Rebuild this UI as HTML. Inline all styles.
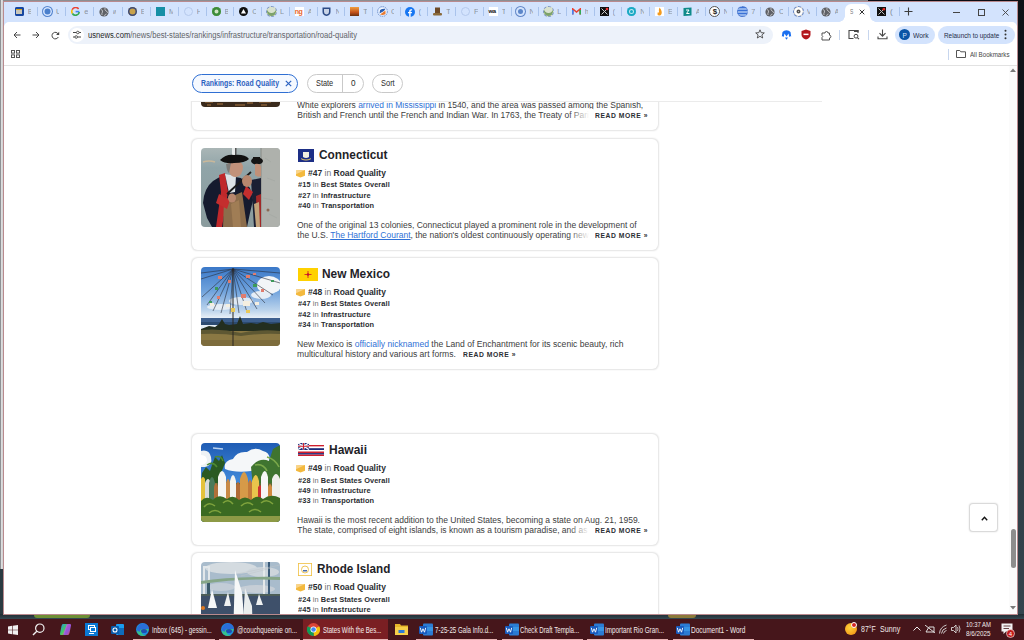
<!DOCTYPE html><html><head><meta charset="utf-8"><style>
*{margin:0;padding:0;box-sizing:border-box}
html,body{width:1024px;height:640px;overflow:hidden;background:#1b252c;font-family:"Liberation Sans",sans-serif}
.a{position:absolute}
.nw{white-space:nowrap}
.sep{position:absolute;top:7px;width:1px;height:9px;background:#a9c3ec}
.card{position:absolute;width:466px;height:111px;background:#fff;border-radius:6px;box-shadow:0 0 1.6px 0.4px rgba(0,0,0,.11)}
.img{position:absolute;left:9px;top:9px;width:79px;height:79px;border-radius:4px;overflow:hidden}
.img svg{display:block}
i{font-style:normal;font-weight:normal;color:#6f6f6f}
a{color:#2f71d6;text-decoration:none}
a.u{text-decoration:underline}
.fade{color:inherit}
</style></head><body>
<div class="a" style="left:0;top:0;width:868px;height:1px;background:#8c8e92"></div>
<div class="a" style="left:868px;top:0;width:156px;height:1px;background:#0b0c14"></div>
<div class="a" style="left:0;top:0;width:3px;height:569px;background:linear-gradient(90deg,#8f9194 0,#8f9194 1px,#e0e1e2 1px,#cfd0d1 3px)"></div>
<div class="a" style="left:0;top:569px;width:3px;height:50px;background:#2b3a41"></div>
<div class="a" style="left:1018px;top:0;width:6px;height:618px;background:linear-gradient(#0d1116,#141b21 35%,#2c3a42 60%,#34454e)"></div>
<div class="a" style="left:0;top:614px;width:1024px;height:5px;background:linear-gradient(#1f2b31,#354852)"></div>
<div class="a" style="left:668px;top:615px;width:28px;height:3px;background:#8c7a3a;border-radius:0 0 6px 6px"></div>
<div class="a" style="left:34px;top:615px;width:56px;height:3px;background:#6e8f34;border-radius:0 0 4px 4px"></div>
<div class="a" style="left:3px;top:1px;width:1015px;height:614px;background:#fff;border:1px solid #b98a8e"></div>
<div class="a" style="left:4px;top:2px;width:1013px;height:24px;background:#d3e3fd"></div>
<div class="a" style="left:14.600000000000001px;top:7px;width:9px;height:9px;border-radius:2px;background:#1646a0;box-shadow:inset 0 0 0 1.5px #1646a0;"><div style="margin:2px 1.5px;height:5px;background:#c9c6b8;border-top:1.5px solid #d8a21a"></div></div>
<div class="a nw " style="left:27.7px;top:7.80px;line-height:8.27px;color:#8a939f;font-size:7.4px;font-weight:normal;overflow:hidden;width:3.5px;">B</div>
<div class="sep" style="left:36.84px"></div>
<div class="a" style="left:41.88px;top:6px;width:11px;height:11px;border-radius:50%;border:1px dashed #5a88d0;background:#4a7fcc;box-shadow:inset 0 0 0 1.5px #d3e3fd"></div>
<div class="a nw " style="left:55.98px;top:7.80px;line-height:8.27px;color:#8a939f;font-size:7.4px;font-weight:normal;overflow:hidden;width:3.5px;">U</div>
<div class="sep" style="left:65.12px"></div>
<svg class="a" style="left:71.16px;top:7px" width="9" height="9" viewBox="0 0 9 9"><path d="M8.3 4.6H4.6" stroke="#4285f4" stroke-width="1.6"/><path d="M7.6 2A3.7 3.7 0 0 0 1.2 2.8" fill="none" stroke="#ea4335" stroke-width="1.6"/><path d="M1.2 2.8A3.7 3.7 0 0 0 1.4 6.5" fill="none" stroke="#fbbc05" stroke-width="1.6"/><path d="M1.4 6.5A3.7 3.7 0 0 0 8.2 5" fill="none" stroke="#34a853" stroke-width="1.6"/></svg>
<div class="a nw " style="left:84.26px;top:7.80px;line-height:8.27px;color:#8a939f;font-size:7.4px;font-weight:normal;overflow:hidden;width:3.5px;">e</div>
<div class="sep" style="left:93.4px"></div>
<svg class="a" style="left:98.94px;top:6.5px" width="10" height="10" viewBox="0 0 10 10"><circle cx="5" cy="5" r="4.6" fill="#5f6166"/><path d="M2 2.5Q4 3 3.5 5Q2.5 6 3 8M6 1Q5.5 3 7 4Q8.5 4.5 9 6M5.5 9Q6 7 7.5 7" stroke="#c8cacd" stroke-width="0.9" fill="none"/></svg>
<div class="a nw " style="left:112.54px;top:7.80px;line-height:8.27px;color:#8a939f;font-size:7.4px;font-weight:normal;overflow:hidden;width:3.5px;">w</div>
<div class="sep" style="left:121.68px"></div>
<div class="a" style="left:127.72px;top:7px;width:9px;height:9px;border-radius:50%;background:#c9a24a;box-shadow:inset 0 0 0 1.5px #3b4a7a"></div>
<div class="a nw " style="left:140.82px;top:7.80px;line-height:8.27px;color:#8a939f;font-size:7.4px;font-weight:normal;overflow:hidden;width:3.5px;">E</div>
<div class="sep" style="left:149.96px"></div>
<div class="a" style="left:156.0px;top:7px;width:9px;height:9px;background:#168fa5"></div>
<div class="a nw " style="left:169.1px;top:7.80px;line-height:8.27px;color:#8a939f;font-size:7.4px;font-weight:normal;overflow:hidden;width:3.5px;">M</div>
<div class="sep" style="left:177.97px"></div>
<div class="a" style="left:183.75px;top:7px;width:9px;height:9px;border-radius:50%;border:1.3px solid #b5c9ec"></div>
<div class="a nw " style="left:196.85px;top:7.80px;line-height:8.27px;color:#8a939f;font-size:7.4px;font-weight:normal;overflow:hidden;width:3.5px;">H</div>
<div class="sep" style="left:205.72px"></div>
<div class="a" style="left:211.5px;top:7px;width:9px;height:9px;border-radius:50%;background:#3b8c3a;box-shadow:inset 0 0 0 2.5px #3b8c3a,inset 0 0 0 5px #cfe5c5"></div>
<div class="a nw " style="left:224.6px;top:7.80px;line-height:8.27px;color:#8a939f;font-size:7.4px;font-weight:normal;overflow:hidden;width:3.5px;">B</div>
<div class="sep" style="left:233.47px"></div>
<svg class="a" style="left:239.25px;top:7px" width="9" height="9"><circle cx="4.5" cy="4.5" r="4.5" fill="#111"/><path d="M4.5 2L7 6.5H2Z" fill="#fff"/></svg>
<div class="a nw " style="left:252.35px;top:7.80px;line-height:8.27px;color:#8a939f;font-size:7.4px;font-weight:normal;overflow:hidden;width:3.5px;">C</div>
<div class="sep" style="left:261.23px"></div>
<div class="a" style="left:266.0px;top:6px;width:11px;height:11px;border-radius:50%;border:1px dashed #7d96c4;background:#d9e2cf;box-shadow:inset 0 -3px 0 0 #7ea36a"></div>
<div class="a nw " style="left:280.1px;top:7.80px;line-height:8.27px;color:#8a939f;font-size:7.4px;font-weight:normal;overflow:hidden;width:3.5px;">L</div>
<div class="sep" style="left:288.95px"></div>
<div class="a" style="left:294.7px;top:7px;width:9px;height:9px;background:#fff;color:#e8632b;font-size:7px;line-height:9px;font-weight:bold;letter-spacing:-0.5px">ng</div>
<div class="a nw " style="left:307.8px;top:7.80px;line-height:8.27px;color:#8a939f;font-size:7.4px;font-weight:normal;overflow:hidden;width:3.5px;">A</div>
<div class="sep" style="left:316.65px"></div>
<svg class="a" style="left:322.4px;top:7px" width="9" height="9"><path d="M0.5 0.5H8.5V5Q8.5 8 4.5 9Q0.5 8 0.5 5Z" fill="#2b4a86"/><path d="M2 2H7V5Q7 7 4.5 7.5Q2 7 2 5Z" fill="#c8d3e6"/></svg>
<div class="a nw " style="left:335.5px;top:7.80px;line-height:8.27px;color:#8a939f;font-size:7.4px;font-weight:normal;overflow:hidden;width:3.5px;">N</div>
<div class="sep" style="left:344.35px"></div>
<div class="a" style="left:350.09999999999997px;top:7px;width:9px;height:9px;background:linear-gradient(#f0a040,#c2501a 60%,#6a3010)"></div>
<div class="a nw " style="left:363.2px;top:7.80px;line-height:8.27px;color:#8a939f;font-size:7.4px;font-weight:normal;overflow:hidden;width:3.5px;">T</div>
<div class="sep" style="left:372.05px"></div>
<svg class="a" style="left:376.79999999999995px;top:6px" width="11" height="11"><circle cx="5.5" cy="5.5" r="5" fill="none" stroke="#6a8cc8" stroke-width="0.8" stroke-dasharray="1.5 0.8"/><circle cx="5.5" cy="5.5" r="3.6" fill="#fff"/><path d="M2.5 7.5L3 4Q5 2.5 8.5 2.8L7 5Z" fill="#2a5db0"/><path d="M3 8.5L8.5 4.5V8Q6 9.5 3 8.5Z" fill="#e87a30"/></svg>
<div class="a nw " style="left:390.9px;top:7.80px;line-height:8.27px;color:#8a939f;font-size:7.4px;font-weight:normal;overflow:hidden;width:3.5px;">C</div>
<div class="sep" style="left:399.75px"></div>
<svg class="a" style="left:405.0px;top:6.5px" width="10" height="10"><circle cx="5" cy="5" r="5" fill="#1877f2"/><path d="M5.6 10V6.3H6.8L7 4.9H5.6V4.1Q5.6 3.5 6.3 3.5H7.1V2.3Q6.6 2.2 6 2.2Q4.2 2.2 4.2 4V4.9H3V6.3H4.2V10Z" fill="#fff"/></svg>
<div class="a nw " style="left:418.6px;top:7.80px;line-height:8.27px;color:#8a939f;font-size:7.4px;font-weight:normal;overflow:hidden;width:3.5px;">(</div>
<div class="sep" style="left:427.45px"></div>
<svg class="a" style="left:433.19999999999993px;top:7px" width="9" height="9"><rect x="2" y="0.5" width="5" height="6" fill="#6d4a28"/><rect x="0" y="6" width="9" height="2.5" rx="1" fill="#8a6a3a"/></svg>
<div class="a nw " style="left:446.3px;top:7.80px;line-height:8.27px;color:#8a939f;font-size:7.4px;font-weight:normal;overflow:hidden;width:3.5px;">T</div>
<div class="sep" style="left:455.15px"></div>
<div class="a" style="left:460.9px;top:7px;width:9px;height:9px;border-radius:50%;border:1.3px solid #b5c9ec"></div>
<div class="a nw " style="left:474.0px;top:7.80px;line-height:8.27px;color:#8a939f;font-size:7.4px;font-weight:normal;overflow:hidden;width:3.5px;">F</div>
<div class="sep" style="left:482.85px"></div>
<div class="a" style="left:488.59999999999997px;top:7px;width:9px;height:9px;background:#fff;color:#111;font-size:6px;line-height:9px;font-weight:bold;letter-spacing:-0.6px">wa</div>
<div class="a nw " style="left:501.7px;top:7.80px;line-height:8.27px;color:#8a939f;font-size:7.4px;font-weight:normal;overflow:hidden;width:3.5px;">T</div>
<div class="sep" style="left:510.55px"></div>
<div class="a" style="left:515.3px;top:6px;width:11px;height:11px;border-radius:50%;border:1px dashed #6a8ac8;background:#5c86c8;box-shadow:inset 0 0 0 2px #d3e3fd"></div>
<div class="a nw " style="left:529.4px;top:7.80px;line-height:8.27px;color:#8a939f;font-size:7.4px;font-weight:normal;overflow:hidden;width:3.5px;">N</div>
<div class="sep" style="left:538.27px"></div>
<div class="a" style="left:543.0363636363636px;top:6px;width:11px;height:11px;border-radius:50%;border:1px dashed #7d96c4;background:#d9e2cf;box-shadow:inset 0 -3px 0 0 #7ea36a"></div>
<div class="a nw " style="left:557.14px;top:7.80px;line-height:8.27px;color:#8a939f;font-size:7.4px;font-weight:normal;overflow:hidden;width:3.5px;">L</div>
<div class="sep" style="left:566.0px"></div>
<svg class="a" style="left:571.7727272727273px;top:8px" width="9" height="7"><path d="M0.8 6.5V1L4.5 4L8.2 1V6.5" fill="none" stroke="#ea4335" stroke-width="1.6"/><path d="M0.8 6.5V2" stroke="#4285f4" stroke-width="1.6"/><path d="M8.2 6.5V2" stroke="#34a853" stroke-width="1.6"/></svg>
<div class="a nw " style="left:584.87px;top:7.80px;line-height:8.27px;color:#8a939f;font-size:7.4px;font-weight:normal;overflow:hidden;width:3.5px;">h</div>
<div class="sep" style="left:593.74px"></div>
<svg class="a" style="left:599.5090909090909px;top:7px" width="9" height="9"><rect width="9" height="9" fill="#111"/><path d="M1.5 1.5L7.5 7.5M7.5 1.5L1.5 7.5" stroke="#ccc" stroke-width="1"/><circle cx="7" cy="2" r="1.3" fill="#e33"/></svg>
<div class="a nw " style="left:612.61px;top:7.80px;line-height:8.27px;color:#8a939f;font-size:7.4px;font-weight:normal;overflow:hidden;width:3.5px;">(</div>
<div class="sep" style="left:621.48px"></div>
<div class="a" style="left:627.2454545454545px;top:7px;width:9px;height:9px;border-radius:50%;background:#1aa8c4;box-shadow:inset 0 0 0 2px #1aa8c4,inset 0 0 0 3px #bfe9f2"></div>
<div class="a nw " style="left:640.35px;top:7.80px;line-height:8.27px;color:#8a939f;font-size:7.4px;font-weight:normal;overflow:hidden;width:3.5px;">N</div>
<div class="sep" style="left:649.21px"></div>
<svg class="a" style="left:654.9818181818182px;top:7px" width="9" height="9"><rect width="9" height="9" fill="#fff"/><path d="M4.5 0.5Q7.5 4 6.5 7Q5.5 8.8 4 8.5Q2 8 2.5 5.5Q3.5 6 4 5Q3.5 3 4.5 0.5Z" fill="#f39a1e"/></svg>
<div class="a nw " style="left:668.08px;top:7.80px;line-height:8.27px;color:#8a939f;font-size:7.4px;font-weight:normal;overflow:hidden;width:3.5px;">E</div>
<div class="sep" style="left:676.95px"></div>
<svg class="a" style="left:682.7181818181818px;top:7px" width="9" height="9"><path d="M0.5 1L8.5 0.5V8.5L0.5 9Z" fill="#0f8a8a"/><path d="M3 3H6L3.5 6.5H6.5" fill="none" stroke="#fff" stroke-width="1"/></svg>
<div class="a nw " style="left:695.82px;top:7.80px;line-height:8.27px;color:#8a939f;font-size:7.4px;font-weight:normal;overflow:hidden;width:3.5px;">A</div>
<div class="sep" style="left:704.69px"></div>
<div class="a" style="left:709.4545454545455px;top:6px;width:11px;height:11px;border-radius:50%;border:1px solid #555;background:#fff;color:#222;font-size:8px;font-weight:bold;line-height:10px;text-align:center">$</div>
<div class="a nw " style="left:723.55px;top:7.80px;line-height:8.27px;color:#8a939f;font-size:7.4px;font-weight:normal;overflow:hidden;width:3.5px;">N</div>
<div class="sep" style="left:732.42px"></div>
<div class="a" style="left:737.190909090909px;top:6px;width:11px;height:11px;border-radius:50%;border:1px dashed #5b82d0;background:repeating-linear-gradient(#3a72d6 0 1.5px,#8fb2ec 1.5px 3px)"></div>
<div class="a nw " style="left:751.29px;top:7.80px;line-height:8.27px;color:#8a939f;font-size:7.4px;font-weight:normal;overflow:hidden;width:3.5px;">7</div>
<div class="sep" style="left:760.16px"></div>
<svg class="a" style="left:765.4272727272727px;top:6.5px" width="10" height="10" viewBox="0 0 10 10"><circle cx="5" cy="5" r="4.6" fill="#5f6166"/><path d="M2 2.5Q4 3 3.5 5Q2.5 6 3 8M6 1Q5.5 3 7 4Q8.5 4.5 9 6M5.5 9Q6 7 7.5 7" stroke="#c8cacd" stroke-width="0.9" fill="none"/></svg>
<div class="a nw " style="left:779.03px;top:7.80px;line-height:8.27px;color:#8a939f;font-size:7.4px;font-weight:normal;overflow:hidden;width:3.5px;">C</div>
<div class="sep" style="left:787.9px"></div>
<div class="a" style="left:792.6636363636363px;top:6px;width:11px;height:11px;border-radius:50%;border:1px dashed #6a8ac8;background:#d8d8d8;box-shadow:inset 0 0 0 2.5px #fff,inset 0 0 0 4px #555"></div>
<div class="a nw " style="left:806.76px;top:7.80px;line-height:8.27px;color:#8a939f;font-size:7.4px;font-weight:normal;overflow:hidden;width:3.5px;">V</div>
<div class="sep" style="left:815.63px"></div>
<svg class="a" style="left:820.9px;top:6.5px" width="10" height="10" viewBox="0 0 10 10"><circle cx="5" cy="5" r="4.6" fill="#5f6166"/><path d="M2 2.5Q4 3 3.5 5Q2.5 6 3 8M6 1Q5.5 3 7 4Q8.5 4.5 9 6M5.5 9Q6 7 7.5 7" stroke="#c8cacd" stroke-width="0.9" fill="none"/></svg>
<div class="a nw " style="left:834.5px;top:7.80px;line-height:8.27px;color:#8a939f;font-size:7.4px;font-weight:normal;overflow:hidden;width:3.5px;">A</div>
<div class="a" style="left:845px;top:4px;width:25px;height:18px;background:#fff;border-radius:6px 6px 0 0"></div>
<div class="a" style="left:839px;top:16px;width:6px;height:6px;background:radial-gradient(circle at 0 0,#d3e3fd 5.5px,#fff 6px)"></div>
<div class="a" style="left:870px;top:16px;width:6px;height:6px;background:radial-gradient(circle at 100% 0,#d3e3fd 5.5px,#fff 6px)"></div>
<div class="a nw " style="left:850px;top:8.42px;line-height:8.49px;color:#777;font-size:7.6px;font-weight:normal;transform:scaleX(0.6498);transform-origin:0 0;">S</div>
<svg class="a" style="left:859.3px;top:9.3px" width="6" height="6"><path d="M0.7 0.7L5.3 5.3M5.3 0.7L0.7 5.3" stroke="#333" stroke-width="1"/></svg>
<svg class="a" style="left:877px;top:7px" width="9" height="9"><rect width="9" height="9" fill="#111"/><path d="M1.5 1.5L7.5 7.5M7.5 1.5L1.5 7.5" stroke="#bbb" stroke-width="1"/><circle cx="6.8" cy="2.2" r="1.3" fill="#e22"/></svg>
<div class="a nw " style="left:890px;top:8.46px;line-height:8.94px;color:#7f8997;font-size:8px;font-weight:normal;">(</div>
<div class="sep" style="left:899px"></div>
<svg class="a" style="left:904px;top:7px" width="9" height="9"><path d="M4.5 0.5V8.5M0.5 4.5H8.5" stroke="#3c3c3c" stroke-width="1.1"/></svg>
<div class="a" style="left:952.5px;top:11.5px;width:7px;height:1px;background:#444"></div>
<div class="a" style="left:977.5px;top:8.5px;width:7px;height:7px;border:1px solid #444"></div>
<svg class="a" style="left:1002px;top:8.5px" width="7" height="7"><path d="M0.5 0.5L6.5 6.5M6.5 0.5L0.5 6.5" stroke="#444" stroke-width="0.9"/></svg>
<div class="a" style="left:4px;top:22px;width:1013px;height:44px;background:#fff;border-radius:5px 5px 0 0"></div>
<div class="a" style="left:4px;top:65px;width:1013px;height:1px;background:#e2e2e2"></div>
<svg class="a" style="left:12.5px;top:31px" width="8" height="8"><path d="M7.5 4H1M4 1L1 4L4 7" fill="none" stroke="#474747" stroke-width="1"/></svg>
<svg class="a" style="left:31.5px;top:31px" width="8" height="8"><path d="M0.5 4H7M4 1L7 4L4 7" fill="none" stroke="#474747" stroke-width="1"/></svg>
<svg class="a" style="left:50.5px;top:30.5px" width="9" height="9"><path d="M7.3 3.2A3.3 3.3 0 1 0 7.3 6" fill="none" stroke="#474747" stroke-width="1"/><path d="M8.2 0.8V3.9H5.1Z" fill="#474747"/></svg>
<div class="a" style="left:68px;top:26px;width:705px;height:17.5px;background:#edf2fa;border-radius:9px"></div>
<div class="a" style="left:70px;top:28px;width:13.5px;height:13.5px;background:#fff;border-radius:50%"></div>
<svg class="a" style="left:72px;top:30px" width="10" height="10"><path d="M1 2.5H4.3M7.2 2.5H9M1 7H2.8M5.7 7H9" stroke="#474747" stroke-width="1"/><circle cx="5.8" cy="2.5" r="1.3" fill="none" stroke="#474747" stroke-width="0.9"/><circle cx="4.2" cy="7" r="1.3" fill="none" stroke="#474747" stroke-width="0.9"/></svg>
<div class="a nw " style="left:88.2px;top:30.60px;line-height:9.38px;color:#5f6368;font-size:8.4px;font-weight:normal;transform:scaleX(0.9072);transform-origin:0 0;"><span style="color:#262626">usnews.com</span>/news/best-states/rankings/infrastructure/transportation/road-quality</div>
<svg class="a" style="left:755px;top:29px" width="10" height="10"><path d="M5 0.8L6.2 3.7L9.3 3.9L6.9 5.9L7.7 9L5 7.3L2.3 9L3.1 5.9L0.7 3.9L3.8 3.7Z" fill="none" stroke="#474747" stroke-width="0.9"/></svg>
<svg class="a" style="left:781px;top:29.5px" width="11" height="10"><path d="M0.8 6.5L1.5 2Q3 0.3 5.5 0.3Q8 0.3 9.5 2L10.2 6.5Q9 6 8.3 7L7.5 3.5L5.5 6.5L3.5 3.5L2.7 7Q2 6 0.8 6.5Z" fill="#1a6ff0"/><path d="M4 7.5L5.5 9.8L7 7.5Z" fill="#1a6ff0"/></svg>
<svg class="a" style="left:801px;top:29px" width="10" height="11"><path d="M5 0.5L9.5 2V5.5Q9.5 9 5 10.5Q0.5 9 0.5 5.5V2Z" fill="#b3181e"/><rect x="2.5" y="4.6" width="5" height="1.5" fill="#fff"/></svg>
<svg class="a" style="left:820.5px;top:29.5px" width="11" height="11"><path d="M1 3H4A1.5 1.5 0 0 1 7 3H8.5V5.2A1.4 1.4 0 0 1 8.5 8V10H1V7.5A1.2 1.2 0 0 0 1 5.5Z" fill="none" stroke="#505050" stroke-width="1" stroke-linejoin="round"/></svg>
<div class="a" style="left:839px;top:30px;width:1px;height:10px;background:#c7d6ee"></div>
<svg class="a" style="left:848px;top:29px" width="12" height="11"><path d="M5.5 9.5H1V1.5H10V4" fill="none" stroke="#474747" stroke-width="1.1"/><rect x="6" y="1" width="4.5" height="2" fill="#474747"/><circle cx="8" cy="7.2" r="1.9" fill="none" stroke="#474747" stroke-width="1"/><path d="M9.4 8.6L11 10.2" stroke="#474747" stroke-width="1.1"/></svg>
<div class="a" style="left:868px;top:30px;width:1px;height:10px;background:#c7d6ee"></div>
<svg class="a" style="left:877px;top:29px" width="11" height="11"><path d="M5.5 0.5V7M2.5 4.2L5.5 7.2L8.5 4.2M1 7.5V9.8H10V7.5" fill="none" stroke="#474747" stroke-width="1.1"/></svg>
<div class="a" style="left:894.5px;top:26px;width:40.5px;height:17.5px;background:#d3e3fd;border-radius:9px"></div>
<div class="a" style="left:899.3px;top:29.3px;width:11px;height:11px;background:#0b55a6;border-radius:50%"></div>
<div class="a nw " style="left:902.6px;top:32.42px;line-height:7.26px;color:#d8e6ff;font-size:6.5px;font-weight:normal;">P</div>
<div class="a nw " style="left:913px;top:31.91px;line-height:8.38px;color:#1f2d4a;font-size:7.5px;font-weight:normal;transform:scaleX(0.8978);transform-origin:0 0;">Work</div>
<div class="a" style="left:938px;top:26px;width:76.5px;height:17.5px;background:#d3e3fd;border-radius:9px"></div>
<div class="a nw " style="left:943.5px;top:31.91px;line-height:8.38px;color:#1f2d4a;font-size:7.5px;font-weight:normal;transform:scaleX(0.8484);transform-origin:0 0;">Relaunch to update</div>
<svg class="a" style="left:1004px;top:29px" width="3" height="11"><circle cx="1.5" cy="1.8" r="1" fill="#333"/><circle cx="1.5" cy="5.5" r="1" fill="#333"/><circle cx="1.5" cy="9.2" r="1" fill="#333"/></svg>
<svg class="a" style="left:11px;top:50px" width="9" height="8"><rect x="0.5" y="0.5" width="3" height="2.6" fill="none" stroke="#555" stroke-width="1"/><rect x="5.5" y="0.5" width="3" height="2.6" fill="none" stroke="#555" stroke-width="1"/><rect x="0.5" y="4.9" width="3" height="2.6" fill="none" stroke="#555" stroke-width="1"/><rect x="5.5" y="4.9" width="3" height="2.6" fill="none" stroke="#555" stroke-width="1"/></svg>
<div class="a" style="left:948px;top:49px;width:1px;height:11px;background:#c7d6ee"></div>
<svg class="a" style="left:956px;top:50px" width="10" height="8"><path d="M0.5 0.5H3.8L4.8 1.8H9.5V7.5H0.5Z" fill="none" stroke="#555" stroke-width="1"/></svg>
<div class="a nw " style="left:970px;top:50.91px;line-height:8.38px;color:#474747;font-size:7.5px;font-weight:normal;transform:scaleX(0.8240);transform-origin:0 0;">All Bookmarks</div>
<div class="a" style="left:4px;top:66px;width:1005px;height:548px;overflow:hidden;background:#fff">
<div class="card" style="left:188px;top:-47.3px">
<div class="img"><svg width="79" height="79"><rect width="79" height="79" fill="#3a2a1c"/><path d="M4 74H12M16 76H22M28 73H40M46 75H52M58 74H70M6 77H10M34 77H44M60 77H66" stroke="#a8743e" stroke-width="1"/></svg></div>
<div class="a" style="left:106px;top:9px;width:0px;height:13px"></div>
</div>
<svg class="a" style="left:292.4px;top:-16.5px" width="9" height="8" viewBox="0 0 9 8"><path d="M0 0.6L9 0V5.8L4.5 7.6L0 5.8Z" fill="#f3b93e"/><path d="M0 0.6L9 0L0 4.2Z" fill="#f9d48a"/></svg>
<div class="a nw " style="left:304.2px;top:-16.88px;line-height:9.61px;color:#2a2d31;font-size:8.6px;font-weight:bold;transform:scaleX(0.9879);transform-origin:0 0;">#49 <i>in</i> Road Quality</div>
<div class="a nw " style="left:293.5px;top:-4.69px;line-height:8.38px;color:#2a2d31;font-size:7.5px;font-weight:bold;letter-spacing:0.1px;transform:scaleX(1.0793);transform-origin:0 0;"># <i>in</i> Best States Overall</div>
<div class="a nw " style="left:293.5px;top:5.71px;line-height:8.38px;color:#2a2d31;font-size:7.5px;font-weight:bold;letter-spacing:0.1px;transform:scaleX(1.1187);transform-origin:0 0;"># <i>in</i> Infrastructure</div>
<div class="a nw " style="left:293.5px;top:16.11px;line-height:8.38px;color:#2a2d31;font-size:7.5px;font-weight:bold;letter-spacing:0.1px;transform:scaleX(1.1089);transform-origin:0 0;"># <i>in</i> Transportation</div>
<div class="a nw " style="left:293.3px;top:35.11px;line-height:9.49px;color:#404040;font-size:8.5px;font-weight:normal;transform:scaleX(0.9955);transform-origin:0 0;">White explorers <a>arrived in Mississippi</a> in 1540, and the area was passed among the Spanish,</div>
<div class="a nw " style="left:293.3px;top:44.71px;line-height:9.49px;color:#404040;font-size:8.5px;font-weight:normal;overflow:hidden;width:293.7px;">British and French until the French and Indian War. In 1763, the Treaty of <span class="fade">Paris</span></div>
<div class="a" style="left:565px;top:43.2px;width:24px;height:11px;background:linear-gradient(90deg,rgba(255,255,255,0),#fff 85%)"></div>
<div class="a nw " style="left:591px;top:45.79px;line-height:8.15px;color:#2b2e33;font-size:7.3px;font-weight:bold;letter-spacing:0.6px;transform:scaleX(0.9253);transform-origin:0 0;">READ MORE »</div>
<div class="card" style="left:188px;top:72.69999999999999px">
<div class="img"><svg width="79" height="79" viewBox="0 0 79 79"><defs><linearGradient id="ctbg" x1="0" y1="0" x2="0" y2="1"><stop offset="0" stop-color="#aab6b6"/><stop offset="0.25" stop-color="#90a4a8"/><stop offset="1" stop-color="#8a9b9d"/></linearGradient></defs>
<rect width="79" height="79" fill="url(#ctbg)"/>
<rect x="31" y="0" width="3" height="9" fill="#e8ecec"/><rect x="34" y="0" width="1.5" height="9" fill="#555"/>
<path d="M2 14Q8 12 14 14" stroke="#c9b89a" stroke-width="1.5" fill="none"/>
<rect x="60" y="0" width="19" height="79" fill="#aeb1ac"/><path d="M60 0V79" stroke="#8e918c" stroke-width="1.2"/>
<path d="M64 10L70 14M66 30L74 33M62 50L72 52M68 66L76 70" stroke="#a5a8a3" stroke-width="0.8"/>
<circle cx="67" cy="62" r="1.5" fill="#8a6a55"/>
<ellipse cx="56" cy="13" rx="6" ry="3.5" fill="#141414"/><rect x="52" y="9" width="7" height="4" fill="#141414"/>
<path d="M54 16Q60 15 60 20V28Q57 30 54 27Z" fill="#c09078"/>
<path d="M50 32L60 30L60 79H53Z" fill="#1b1f33"/><path d="M55 48L60 46L60 79H56Z" fill="#a02828"/><path d="M53 56L58 54L59 79H55Z" fill="#c2a27a"/>
<path d="M2 55Q3 40 12 33L22 27L40 30L49 40L52 52L49 65L46 79H11L6 70Z" fill="#151a2e"/>
<path d="M18 27L24 25L27 44L21 79H15L20 44Z" fill="#c0282b"/>
<path d="M24 26L35 28L34 44L28 45Z" fill="#dde2e6"/>
<path d="M23 52L41 44L46 79H22Z" fill="#8c6d4b"/><path d="M30 56L38 52L40 79H32Z" fill="#a07d55"/>
<path d="M18 46L29 52L26 61L15 55Z" fill="#c42e2e"/><path d="M45 38L52 44L48 52L42 46Z" fill="#c42e2e"/>
<path d="M27 14Q27 30 35 29Q42 28 42 18Q40 12 34 12Z" fill="#c2927a"/><path d="M25 16Q26 24 28 25L30 15Z" fill="#7d7b78"/>
<path d="M19 12Q25 6 33 7Q44 6 48 11Q44 15 33 15Q24 16 19 12Z" fill="#101010"/>
<path d="M26 46L50 24" stroke="#1a1a1a" stroke-width="1.8"/>
<ellipse cx="46" cy="33" rx="5" ry="6" fill="#b8876e"/><ellipse cx="31" cy="50" rx="4" ry="4.5" fill="#b8876e"/>
</svg></div>
<div class="a" style="left:106px;top:9px;width:16px;height:13px"><svg width="16" height="13" viewBox="0 0 16 13"><rect width="16" height="13" fill="#1d2f86"/><path d="M5 3H11V8Q8 10 5 8Z" fill="#f3efe0"/><path d="M3 9Q8 12 13 9L12.5 10.5Q8 12.5 3.5 10.5Z" fill="#e0c46a"/></svg></div>
</div>
<div class="a nw " style="left:315.3px;top:82.66px;line-height:13.63px;color:#1f2328;font-size:12.2px;font-weight:bold;transform:scaleX(0.9727);transform-origin:0 0;">Connecticut</div>
<svg class="a" style="left:292.4px;top:103.5px" width="9" height="8" viewBox="0 0 9 8"><path d="M0 0.6L9 0V5.8L4.5 7.6L0 5.8Z" fill="#f3b93e"/><path d="M0 0.6L9 0L0 4.2Z" fill="#f9d48a"/></svg>
<div class="a nw " style="left:304.2px;top:103.12px;line-height:9.61px;color:#2a2d31;font-size:8.6px;font-weight:bold;transform:scaleX(0.9879);transform-origin:0 0;">#47 <i>in</i> Road Quality</div>
<div class="a nw " style="left:293.5px;top:115.31px;line-height:8.38px;color:#2a2d31;font-size:7.5px;font-weight:bold;letter-spacing:0.1px;transform:scaleX(0.9817);transform-origin:0 0;">#15 <i>in</i> Best States Overall</div>
<div class="a nw " style="left:293.5px;top:125.71px;line-height:8.38px;color:#2a2d31;font-size:7.5px;font-weight:bold;letter-spacing:0.1px;transform:scaleX(0.9901);transform-origin:0 0;">#27 <i>in</i> Infrastructure</div>
<div class="a nw " style="left:293.5px;top:136.11px;line-height:8.38px;color:#2a2d31;font-size:7.5px;font-weight:bold;letter-spacing:0.1px;transform:scaleX(0.9876);transform-origin:0 0;">#40 <i>in</i> Transportation</div>
<div class="a nw " style="left:293.3px;top:155.11px;line-height:9.49px;color:#404040;font-size:8.5px;font-weight:normal;transform:scaleX(1.0013);transform-origin:0 0;">One of the original 13 colonies, Connecticut played a prominent role in the development of</div>
<div class="a nw " style="left:293.3px;top:164.71px;line-height:9.49px;color:#404040;font-size:8.5px;font-weight:normal;overflow:hidden;width:293.7px;">the U.S. <a class="u">The Hartford Courant</a>, the nation's oldest continuously operating <span class="fade">news</span></div>
<div class="a" style="left:565px;top:163.2px;width:24px;height:11px;background:linear-gradient(90deg,rgba(255,255,255,0),#fff 85%)"></div>
<div class="a nw " style="left:591px;top:165.79px;line-height:8.15px;color:#2b2e33;font-size:7.3px;font-weight:bold;letter-spacing:0.6px;transform:scaleX(0.9253);transform-origin:0 0;">READ MORE »</div>
<div class="card" style="left:188px;top:191.8px">
<div class="img"><svg width="79" height="79" viewBox="0 0 79 79"><defs><linearGradient id="nmsky" x1="0" y1="0" x2="0" y2="1"><stop offset="0" stop-color="#3a78c8"/><stop offset="0.3" stop-color="#6fa2dc"/><stop offset="0.55" stop-color="#bcd4ec"/><stop offset="0.64" stop-color="#e6eef6"/></linearGradient></defs>
<rect width="79" height="79" fill="url(#nmsky)"/>
<ellipse cx="68" cy="18" rx="12" ry="9" fill="#f2f5f8"/><ellipse cx="60" cy="28" rx="10" ry="4" fill="#e6eef6"/><ellipse cx="40" cy="34" rx="12" ry="4" fill="#dfe9f4"/><ellipse cx="20" cy="40" rx="14" ry="3" fill="#e4ecf5"/>
<rect y="51" width="79" height="7" fill="#3d5f8e"/><rect y="55" width="79" height="3" fill="#2c4a70"/>
<path d="M0 62L8 59L14 60L18 57L21 52L24 57L28 58L36 57L39 49L42 57L50 56L56 57L62 55L70 57L79 56V66H0Z" fill="#232e1f"/>
<rect y="64" width="79" height="15" fill="#8a7843"/><path d="M0 63Q20 61 40 66Q60 62 79 64V67Q60 66 40 69Q20 66 0 67Z" fill="#5e5833"/><rect y="73" width="79" height="6" fill="#7d6c3c"/>
<g stroke="#2a2f3c" stroke-width="0.6" fill="none"><path d="M32 2L0 6M32 2L0 12M32 2L1 30M32 2L6 38M32 2L12 44M32 2L20 46M32 2L29 47M32 2L38 46M32 2L46 45M32 2L56 42M32 2L64 36M32 2L72 28M32 2L79 16M32 2L79 6"/></g>
<rect x="31.5" y="1" width="1" height="78" fill="#2a2620"/>
<g fill="#e07d6e"><rect x="17" y="9" width="4" height="3"/><rect x="27" y="13" width="3" height="3"/><rect x="40" y="27" width="5" height="4"/><rect x="45" y="8" width="4" height="3"/><rect x="16" y="29" width="3" height="3"/><rect x="52" y="6" width="3" height="2"/><rect x="60" y="22" width="3" height="3"/></g>
<g fill="#3c9a5a"><rect x="52" y="17" width="4" height="3"/><rect x="14" y="20" width="3" height="3"/><rect x="70" y="13" width="3" height="2"/><rect x="8" y="34" width="3" height="2"/></g>
<g fill="#f4eee0"><rect x="42" y="34" width="7" height="5"/><rect x="9" y="36" width="4" height="3"/><rect x="25" y="37" width="4" height="3"/><rect x="54" y="35" width="4" height="3"/></g>
<rect x="30" y="41" width="4" height="4" fill="#e8c85a"/><rect x="45" y="43" width="4" height="3" fill="#e8c85a"/>
</svg></div>
<div class="a" style="left:106px;top:9px;width:20px;height:13px"><svg width="20" height="13" viewBox="0 0 20 13"><rect width="20" height="13" fill="#ffd100"/><circle cx="10" cy="6.5" r="1.3" fill="#c8102e"/><path d="M10 3V10M6.5 6.5H13.5" stroke="#c8102e" stroke-width="0.8"/></svg></div>
</div>
<div class="a nw " style="left:317.9px;top:201.76px;line-height:13.63px;color:#1f2328;font-size:12.2px;font-weight:bold;transform:scaleX(0.9747);transform-origin:0 0;">New Mexico</div>
<svg class="a" style="left:292.4px;top:222.60000000000002px" width="9" height="8" viewBox="0 0 9 8"><path d="M0 0.6L9 0V5.8L4.5 7.6L0 5.8Z" fill="#f3b93e"/><path d="M0 0.6L9 0L0 4.2Z" fill="#f9d48a"/></svg>
<div class="a nw " style="left:304.2px;top:222.22px;line-height:9.61px;color:#2a2d31;font-size:8.6px;font-weight:bold;transform:scaleX(0.9879);transform-origin:0 0;">#48 <i>in</i> Road Quality</div>
<div class="a nw " style="left:293.5px;top:234.41px;line-height:8.38px;color:#2a2d31;font-size:7.5px;font-weight:bold;letter-spacing:0.1px;transform:scaleX(0.9817);transform-origin:0 0;">#47 <i>in</i> Best States Overall</div>
<div class="a nw " style="left:293.5px;top:244.81px;line-height:8.38px;color:#2a2d31;font-size:7.5px;font-weight:bold;letter-spacing:0.1px;transform:scaleX(0.9901);transform-origin:0 0;">#42 <i>in</i> Infrastructure</div>
<div class="a nw " style="left:293.5px;top:255.21px;line-height:8.38px;color:#2a2d31;font-size:7.5px;font-weight:bold;letter-spacing:0.1px;transform:scaleX(0.9876);transform-origin:0 0;">#34 <i>in</i> Transportation</div>
<div class="a nw " style="left:293.3px;top:274.21px;line-height:9.49px;color:#404040;font-size:8.5px;font-weight:normal;transform:scaleX(1.0098);transform-origin:0 0;">New Mexico is <a>officially nicknamed</a> the Land of Enchantment for its scenic beauty, rich</div>
<div class="a nw " style="left:293.3px;top:283.81px;line-height:9.49px;color:#404040;font-size:8.5px;font-weight:normal;transform:scaleX(1.0098);transform-origin:0 0;">multicultural history and various art forms.</div>
<div class="a nw " style="left:458.8px;top:284.89px;line-height:8.15px;color:#2b2e33;font-size:7.3px;font-weight:bold;letter-spacing:0.6px;transform:scaleX(0.9253);transform-origin:0 0;">READ MORE »</div>
<div class="card" style="left:188px;top:368px">
<div class="img"><svg width="79" height="79" viewBox="0 0 79 79"><defs><linearGradient id="hisky" x1="0" y1="0" x2="0" y2="1"><stop offset="0" stop-color="#1f5cb4"/><stop offset="0.45" stop-color="#3f86d6"/></linearGradient></defs>
<rect width="79" height="79" fill="url(#hisky)"/>
<path d="M24 26Q22 18 32 16Q36 8 46 9Q54 3 62 8Q70 10 68 18Q64 26 50 28Q34 30 24 26Z" fill="#f5f7f9"/><path d="M0 8Q8 6 10 14Q12 22 4 24L0 24Z" fill="#eef2f5"/><path d="M0 12Q6 12 6 18Q4 22 0 22Z" fill="#fff"/>
<path d="M12 5L22 6" stroke="#b8d0ee" stroke-width="1.5"/>
<path d="M1 30L5 24L9 28L11 22L14 14L18 18L21 12L24 20L20 30L26 40L0 42Z" fill="#2a5a22"/><path d="M6 22Q12 18 16 24M14 14Q20 12 22 18" stroke="#4d8a33" stroke-width="1.5" fill="none"/>
<path d="M50 24Q58 14 68 18L72 6L79 2V48L52 44Z" fill="#3f7430"/><path d="M54 22Q62 20 66 28M66 14Q74 16 78 24" stroke="#7aa84a" stroke-width="1.6" fill="none"/>
<rect y="40" width="79" height="39" fill="#5e6a36"/>
<path d="M0 72V36Q2 32 4 36V72Z" fill="#e4c23a"/><path d="M4 72V40Q7 32 10 40V72Z" fill="#d9dcd8"/>
<path d="M8 72V40Q11 28 14 40V72Z" fill="#4a7a5a"/><path d="M13 72V44Q15 36 17 44V72Z" fill="#b0703a"/>
<path d="M17 72V34Q21 22 25 34V72Z" fill="#f6f6f2"/>
<path d="M25 72V40Q27 32 29 40V72Z" fill="#c88a45"/><path d="M29 72V38Q32 26 35 38V72Z" fill="#f3f3ef"/>
<path d="M35 72V42Q37 36 39 42V72Z" fill="#b06a35"/><path d="M39 72V36Q43 22 47 36V72Z" fill="#d69a48"/>
<path d="M47 72V40Q49 34 51 40V72Z" fill="#c27a3a"/><path d="M51 72V38Q55 26 58 38V72Z" fill="#eac54c"/>
<path d="M57 72V44L59 42L61 44V72Z" fill="#c33"/><path d="M60 72V34Q64 22 67 34V72Z" fill="#f6f6f6"/>
<path d="M67 72V44Q69 38 71 44V72Z" fill="#d08a40"/><path d="M71 72V36Q75 26 79 36V72Z" fill="#efefeb"/>
<path d="M0 79V58Q5 52 12 57Q18 50 26 56Q32 51 38 57Q44 52 50 57Q56 51 62 56Q70 50 79 55V79Z" fill="#3b6a22"/>
<path d="M3 64Q8 58 14 63M22 60Q27 55 32 61M40 63Q46 57 52 62M60 60Q66 55 72 61M8 70Q14 65 20 70M48 69Q54 64 60 69" stroke="#7ea23c" stroke-width="1.6" fill="none"/>
<rect y="73" width="79" height="6" fill="#8d9a46"/></svg></div>
<div class="a" style="left:106px;top:8.3px;width:26px;height:13px"><svg width="26" height="13" viewBox="0 0 26 13"><rect width="26" height="13" fill="#fff"/><rect y="2" width="26" height="1.6" fill="#cf1e2d"/><rect y="3.6" width="26" height="1.6" fill="#fff"/><rect y="5.2" width="26" height="1.8" fill="#1b2a7a"/><rect y="8.5" width="26" height="1.6" fill="#cf1e2d"/><rect y="10.1" width="26" height="1.5" fill="#1b2a7a"/><rect y="11.6" width="26" height="1.4" fill="#cf1e2d"/><rect width="11" height="6.5" fill="#1b2a7a"/><path d="M0 0L11 6.5M11 0L0 6.5" stroke="#fff" stroke-width="1.4"/><path d="M5.5 0V6.5M0 3.25H11" stroke="#fff" stroke-width="2"/><path d="M5.5 0V6.5M0 3.25H11" stroke="#cf1e2d" stroke-width="1"/></svg></div>
</div>
<div class="a nw " style="left:324.5px;top:377.96px;line-height:13.63px;color:#1f2328;font-size:12.2px;font-weight:bold;transform:scaleX(0.9838);transform-origin:0 0;">Hawaii</div>
<svg class="a" style="left:292.4px;top:398.8px" width="9" height="8" viewBox="0 0 9 8"><path d="M0 0.6L9 0V5.8L4.5 7.6L0 5.8Z" fill="#f3b93e"/><path d="M0 0.6L9 0L0 4.2Z" fill="#f9d48a"/></svg>
<div class="a nw " style="left:304.2px;top:398.42px;line-height:9.61px;color:#2a2d31;font-size:8.6px;font-weight:bold;transform:scaleX(0.9879);transform-origin:0 0;">#49 <i>in</i> Road Quality</div>
<div class="a nw " style="left:293.5px;top:410.61px;line-height:8.38px;color:#2a2d31;font-size:7.5px;font-weight:bold;letter-spacing:0.1px;transform:scaleX(0.9817);transform-origin:0 0;">#28 <i>in</i> Best States Overall</div>
<div class="a nw " style="left:293.5px;top:421.01px;line-height:8.38px;color:#2a2d31;font-size:7.5px;font-weight:bold;letter-spacing:0.1px;transform:scaleX(0.9901);transform-origin:0 0;">#49 <i>in</i> Infrastructure</div>
<div class="a nw " style="left:293.5px;top:431.41px;line-height:8.38px;color:#2a2d31;font-size:7.5px;font-weight:bold;letter-spacing:0.1px;transform:scaleX(0.9876);transform-origin:0 0;">#33 <i>in</i> Transportation</div>
<div class="a nw " style="left:293.3px;top:450.41px;line-height:9.49px;color:#404040;font-size:8.5px;font-weight:normal;transform:scaleX(1.0012);transform-origin:0 0;">Hawaii is the most recent addition to the United States, becoming a state on Aug. 21, 1959.</div>
<div class="a nw " style="left:293.3px;top:460.01px;line-height:9.49px;color:#404040;font-size:8.5px;font-weight:normal;overflow:hidden;width:293.7px;">The state, comprised of eight islands, is known as a tourism paradise, and <span class="fade">as t</span></div>
<div class="a" style="left:565px;top:458.5px;width:24px;height:11px;background:linear-gradient(90deg,rgba(255,255,255,0),#fff 85%)"></div>
<div class="a nw " style="left:591px;top:461.09px;line-height:8.15px;color:#2b2e33;font-size:7.3px;font-weight:bold;letter-spacing:0.6px;transform:scaleX(0.9253);transform-origin:0 0;">READ MORE »</div>
<div class="card" style="left:188px;top:487px">
<div class="img"><svg width="79" height="79" viewBox="0 0 79 79"><rect width="79" height="79" fill="#a9bccc"/>
<ellipse cx="30" cy="6" rx="26" ry="6" fill="#d4dbe0"/><ellipse cx="62" cy="10" rx="16" ry="5" fill="#cdd5dc"/><ellipse cx="56" cy="27" rx="18" ry="4" fill="#c6ced6"/><ellipse cx="20" cy="25" rx="14" ry="4" fill="#c2ccd6"/>
<rect x="2" y="4" width="2" height="34" fill="#e2e7ea"/><rect x="7" y="4" width="2" height="34" fill="#e2e7ea"/><rect x="2" y="4" width="7" height="2" fill="#e2e7ea"/>
<rect x="6" y="19" width="3" height="15" fill="#3a5a6a"/>
<rect x="62" y="0" width="2" height="35" fill="#e4e8ea"/><rect x="67" y="0" width="2" height="35" fill="#3a5a78"/>
<path d="M0 19Q30 14 79 15V18Q40 16 0 22Z" fill="#86a688"/>
<path d="M36 12L79 3M40 14L70 6" stroke="#c0c6ca" stroke-width="0.5"/>
<rect y="32" width="79" height="3" fill="#4d5e58"/>
<rect y="34" width="79" height="45" fill="#3e506a"/>
<path d="M7 46L11 27L16 46Z" fill="#f6f8f8"/><path d="M23 44L27 30L30 44Z" fill="#f0f2f2"/>
<path d="M32 79L34 8L41 30L45 79Z" fill="#f6f8f8"/><path d="M41 79L44 26L51 44L52 79Z" fill="#e9eded"/>
<path d="M55 43L58 32L62 43Z" fill="#eef0f0"/><circle cx="2" cy="46" r="2" fill="#e07a22"/></svg></div>
<div class="a" style="left:106px;top:8.5px;width:14px;height:13px"><svg width="14" height="13" viewBox="0 0 14 13"><rect x="0.4" y="0.4" width="13.2" height="12.2" fill="#fff" stroke="#f0c040" stroke-width="0.8"/><circle cx="7" cy="6.5" r="3.5" fill="none" stroke="#e8b830" stroke-width="0.8"/><rect x="5" y="7" width="4" height="1.5" fill="#4a6aa8"/></svg></div>
</div>
<div class="a nw " style="left:312.8px;top:496.96px;line-height:13.63px;color:#1f2328;font-size:12.2px;font-weight:bold;transform:scaleX(0.9578);transform-origin:0 0;">Rhode Island</div>
<svg class="a" style="left:292.4px;top:517.8px" width="9" height="8" viewBox="0 0 9 8"><path d="M0 0.6L9 0V5.8L4.5 7.6L0 5.8Z" fill="#f3b93e"/><path d="M0 0.6L9 0L0 4.2Z" fill="#f9d48a"/></svg>
<div class="a nw " style="left:304.2px;top:517.42px;line-height:9.61px;color:#2a2d31;font-size:8.6px;font-weight:bold;transform:scaleX(0.9879);transform-origin:0 0;">#50 <i>in</i> Road Quality</div>
<div class="a nw " style="left:293.5px;top:529.61px;line-height:8.38px;color:#2a2d31;font-size:7.5px;font-weight:bold;letter-spacing:0.1px;transform:scaleX(0.9817);transform-origin:0 0;">#24 <i>in</i> Best States Overall</div>
<div class="a nw " style="left:293.5px;top:540.01px;line-height:8.38px;color:#2a2d31;font-size:7.5px;font-weight:bold;letter-spacing:0.1px;transform:scaleX(0.9901);transform-origin:0 0;">#45 <i>in</i> Infrastructure</div>
<div class="a nw " style="left:293.5px;top:550.41px;line-height:8.38px;color:#2a2d31;font-size:7.5px;font-weight:bold;letter-spacing:0.1px;transform:scaleX(0.9876);transform-origin:0 0;">#41 <i>in</i> Transportation</div>
<div class="a nw " style="left:293.3px;top:569.41px;line-height:9.49px;color:#404040;font-size:8.5px;font-weight:normal;">Rhode Island, the smallest state</div>
<div class="a" style="left:181px;top:0;width:637px;height:35px;background:#fff"></div>
<div class="a" style="left:188px;top:35px;width:630px;height:1px;background:#ebebeb"></div>
<div class="a" style="left:188.3px;top:8px;width:106px;height:19.2px;border:1.8px solid #2f6fd3;border-radius:10px;background:#f5f9ff"></div>
<div class="a nw " style="left:197px;top:13.12px;line-height:9.61px;color:#2c62c0;font-size:8.6px;font-weight:bold;transform:scaleX(0.8046);transform-origin:0 0;">Rankings: Road Quality</div>
<svg class="a" style="left:280.5px;top:14px" width="7" height="7"><path d="M0.8 0.8L6.2 6.2M6.2 0.8L0.8 6.2" stroke="#2c62c0" stroke-width="1.2"/></svg>
<div class="a" style="left:303px;top:8.200000000000003px;width:57px;height:19.3px;border:1px solid #c9c9c9;border-radius:10px"></div>
<div class="a" style="left:338px;top:8.200000000000003px;width:1px;height:19.3px;background:#c9c9c9"></div>
<div class="a nw " style="left:311.9px;top:13.48px;line-height:9.16px;color:#2a2a2a;font-size:8.2px;font-weight:normal;transform:scaleX(0.8993);transform-origin:0 0;">State</div>
<div class="a nw " style="left:347px;top:13.48px;line-height:9.16px;color:#2a2a2a;font-size:8.2px;font-weight:normal;">0</div>
<div class="a" style="left:368px;top:8.200000000000003px;width:31px;height:19.3px;border:1px solid #c9c9c9;border-radius:10px"></div>
<div class="a nw " style="left:376.8px;top:13.48px;line-height:9.16px;color:#2a2a2a;font-size:8.2px;font-weight:normal;transform:scaleX(0.9114);transform-origin:0 0;">Sort</div>
<div class="a" style="left:966.4px;top:438.2px;width:27px;height:27px;border-radius:3px;background:#fff;box-shadow:0 0 1.5px 0.5px rgba(0,0,0,.18)"></div>
<svg class="a" style="left:976.5px;top:449.5px" width="7" height="5"><path d="M0.8 4.2L3.5 1.3L6.2 4.2" fill="none" stroke="#111" stroke-width="1.4"/></svg>
</div>
<div class="a" style="left:1009px;top:66px;width:8px;height:548px;background:#fbfbfb"></div>
<svg class="a" style="left:1010px;top:68px" width="6" height="4"><path d="M0 4L3 0.5L6 4Z" fill="#7a7a7a"/></svg>
<svg class="a" style="left:1010px;top:606px" width="6" height="4"><path d="M0 0L3 3.5L6 0Z" fill="#7a7a7a"/></svg>
<div class="a" style="left:1011px;top:529px;width:5px;height:39px;border-radius:3px;background:#8d8d8d"></div>
<div class="a" style="left:0;top:619px;width:1024px;height:21px;background:#46161b"></div>
<div class="a" style="left:302.6px;top:619px;width:85.4px;height:21px;background:#7a1f23"></div>
<div class="a" style="left:133.3px;top:638.5px;width:81.39999999999998px;height:1.5px;background:#e6b3b3"></div>
<div class="a" style="left:218.6px;top:638.5px;width:81.4px;height:1.5px;background:#e6b3b3"></div>
<div class="a" style="left:302.6px;top:638.5px;width:85.39999999999998px;height:1.5px;background:#e6b3b3"></div>
<div class="a" style="left:416px;top:638.5px;width:81px;height:1.5px;background:#e6b3b3"></div>
<div class="a" style="left:502px;top:638.5px;width:81px;height:1.5px;background:#e6b3b3"></div>
<div class="a" style="left:586.8px;top:638.5px;width:81.10000000000002px;height:1.5px;background:#e6b3b3"></div>
<div class="a" style="left:672.8px;top:638.5px;width:81.0px;height:1.5px;background:#e6b3b3"></div>
<svg class="a" style="left:8px;top:624.5px" width="10" height="10"><path d="M0 1.4L4.2 0.8V4.7H0Z M4.8 0.7L10 0V4.7H4.8Z M0 5.3H4.2V9.2L0 8.6Z M4.8 5.3H10V10L4.8 9.3Z" fill="#f2f2f2"/></svg>
<svg class="a" style="left:32px;top:623px" width="13" height="13"><circle cx="7.8" cy="5.2" r="4.2" fill="none" stroke="#f2f2f2" stroke-width="1.2"/><path d="M4.8 8.2L1 12" stroke="#f2f2f2" stroke-width="1.4"/></svg>
<svg class="a" style="left:59px;top:623px" width="13" height="13"><defs><linearGradient id="cp1" x1="0" y1="0" x2="1" y2="1"><stop offset="0" stop-color="#2e8cf0"/><stop offset="0.5" stop-color="#3ec46d"/><stop offset="1" stop-color="#f3b13a"/></linearGradient><linearGradient id="cp2" x1="0" y1="0" x2="1" y2="1"><stop offset="0" stop-color="#e45bd0"/><stop offset="0.6" stop-color="#9a5cf0"/><stop offset="1" stop-color="#f05a5a"/></linearGradient></defs><path d="M4 1H8Q9 1 8.5 2.5L5.5 11Q5 12 3.5 12H2Q0.5 12 1 10.5L2.5 3Q3 1 4 1Z" fill="url(#cp1)"/><path d="M9 1H11Q12.5 1 12 2.5L10.5 10Q10 12 9 12H5Q4 12 4.5 10.5L7.5 2Q8 1 9 1Z" fill="url(#cp2)" opacity="0.9"/></svg>
<div class="a" style="left:85px;top:623px;width:13px;height:13px;background:#0a78d4"><div style="position:absolute;left:3px;top:2px;width:7px;height:5px;border:1px solid #fff"></div><div style="position:absolute;left:5px;top:4px;width:6px;height:5px;border:1px solid #fff;background:#0a78d4"></div><div style="position:absolute;left:4px;top:10px;width:5px;height:1px;background:#fff"></div></div>
<svg class="a" style="left:111px;top:623px" width="13" height="13"><rect x="5" y="1" width="8" height="11" rx="1" fill="#1a9cf0"/><rect x="7" y="5" width="6" height="7" fill="#0f6cbd"/><rect x="0" y="3" width="8" height="8" rx="1" fill="#0a5aa8"/><circle cx="4" cy="7" r="2" fill="none" stroke="#fff" stroke-width="1.1"/></svg>
<svg class="a" style="left:136px;top:623px" width="13" height="13"><circle cx="6.5" cy="6.5" r="6.5" fill="#1d8fe0"/><path d="M1 9Q2 3 7 2.5Q12 2.5 12.5 7Q12 9 9 8.5Q5 8 6 10.5Q7 12.5 10.5 12Q6 14 2.5 11.5" fill="#37c38a"/><path d="M0.8 7Q1.5 1 7 0.5Q12.5 0.5 13 6H7Q4 6 3.5 9Z" fill="#2a6ed8"/><ellipse cx="8" cy="8" rx="3" ry="2" fill="#1f4fb0"/></svg>
<div class="a nw " style="left:151.6px;top:625.78px;line-height:9.16px;color:#f2eaea;font-size:8.2px;font-weight:normal;transform:scaleX(0.7552);transform-origin:0 0;">Inbox (645) - gessin...</div>
<svg class="a" style="left:221px;top:623px" width="13" height="13"><circle cx="6.5" cy="6.5" r="6.5" fill="#1d8fe0"/><path d="M1 9Q2 3 7 2.5Q12 2.5 12.5 7Q12 9 9 8.5Q5 8 6 10.5Q7 12.5 10.5 12Q6 14 2.5 11.5" fill="#37c38a"/><path d="M0.8 7Q1.5 1 7 0.5Q12.5 0.5 13 6H7Q4 6 3.5 9Z" fill="#2a6ed8"/><ellipse cx="8" cy="8" rx="3" ry="2" fill="#1f4fb0"/></svg>
<div class="a nw " style="left:236.8px;top:625.78px;line-height:9.16px;color:#f2eaea;font-size:8.2px;font-weight:normal;transform:scaleX(0.7740);transform-origin:0 0;">@couchqueenie on...</div>
<svg class="a" style="left:307px;top:623px" width="13" height="13"><circle cx="6.5" cy="6.5" r="6.5" fill="#db4437"/><path d="M6.5 6.5L12.2 3.3A6.5 6.5 0 0 1 6.8 13Z" fill="#f4c20d"/><path d="M6.5 6.5L6.8 13A6.5 6.5 0 0 1 0.8 3.3Z" fill="#0f9d58"/><circle cx="6.5" cy="6.5" r="3" fill="#fff"/><circle cx="6.5" cy="6.5" r="2.3" fill="#4285f4"/></svg>
<div class="a nw " style="left:322.7px;top:625.78px;line-height:9.16px;color:#f6eeee;font-size:8.2px;font-weight:normal;transform:scaleX(0.7405);transform-origin:0 0;">States With the Bes...</div>
<svg class="a" style="left:395px;top:623px" width="13" height="12"><path d="M0 1H5L6 2.5H13V12H0Z" fill="#e8b62a"/><rect x="0" y="4" width="13" height="8" fill="#f6cf4a"/><rect x="3.5" y="7" width="6" height="3" fill="#2a7bd8"/></svg>
<svg class="a" style="left:419px;top:623px" width="14" height="13"><rect x="4" y="0.5" width="10" height="12" rx="1" fill="#2b7cd3"/><rect x="4" y="4" width="10" height="4" fill="#41a5ee" opacity="0.6"/><rect x="0" y="3" width="8" height="8" rx="1" fill="#185abd"/><path d="M1.3 4.8L2.5 9.2L4 5.8L5.5 9.2L6.7 4.8" fill="none" stroke="#fff" stroke-width="0.9"/></svg>
<div class="a nw " style="left:434.7px;top:625.78px;line-height:9.16px;color:#f2eaea;font-size:8.2px;font-weight:normal;transform:scaleX(0.7522);transform-origin:0 0;">7-25-25 Gala Info.d...</div>
<svg class="a" style="left:505px;top:623px" width="14" height="13"><rect x="4" y="0.5" width="10" height="12" rx="1" fill="#2b7cd3"/><rect x="4" y="4" width="10" height="4" fill="#41a5ee" opacity="0.6"/><rect x="0" y="3" width="8" height="8" rx="1" fill="#185abd"/><path d="M1.3 4.8L2.5 9.2L4 5.8L5.5 9.2L6.7 4.8" fill="none" stroke="#fff" stroke-width="0.9"/></svg>
<div class="a nw " style="left:519.8px;top:625.78px;line-height:9.16px;color:#f2eaea;font-size:8.2px;font-weight:normal;transform:scaleX(0.7534);transform-origin:0 0;">Check Draft Templa...</div>
<svg class="a" style="left:590px;top:623px" width="14" height="13"><rect x="4" y="0.5" width="10" height="12" rx="1" fill="#2b7cd3"/><rect x="4" y="4" width="10" height="4" fill="#41a5ee" opacity="0.6"/><rect x="0" y="3" width="8" height="8" rx="1" fill="#185abd"/><path d="M1.3 4.8L2.5 9.2L4 5.8L5.5 9.2L6.7 4.8" fill="none" stroke="#fff" stroke-width="0.9"/></svg>
<div class="a nw " style="left:605.4px;top:625.78px;line-height:9.16px;color:#f2eaea;font-size:8.2px;font-weight:normal;transform:scaleX(0.7717);transform-origin:0 0;">Important Rio Gran...</div>
<svg class="a" style="left:676px;top:623px" width="14" height="13"><rect x="4" y="0.5" width="10" height="12" rx="1" fill="#2b7cd3"/><rect x="4" y="4" width="10" height="4" fill="#41a5ee" opacity="0.6"/><rect x="0" y="3" width="8" height="8" rx="1" fill="#185abd"/><path d="M1.3 4.8L2.5 9.2L4 5.8L5.5 9.2L6.7 4.8" fill="none" stroke="#fff" stroke-width="0.9"/></svg>
<div class="a nw " style="left:690.7px;top:625.78px;line-height:9.16px;color:#f2eaea;font-size:8.2px;font-weight:normal;transform:scaleX(0.7920);transform-origin:0 0;">Document1 - Word</div>
<div class="a" style="left:845px;top:623px;width:12px;height:12px;border-radius:50%;background:radial-gradient(circle at 40% 40%,#ffd23a,#f08a10)"></div>
<div class="a" style="left:851px;top:622px;width:6px;height:6px;border-radius:50%;background:#d42424;border:0.8px solid #fff"></div>
<div class="a nw " style="left:860.7px;top:625.28px;line-height:9.16px;color:#f2eaea;font-size:8.2px;font-weight:normal;transform:scaleX(0.8510);transform-origin:0 0;">87°F</div>
<div class="a nw " style="left:879.8px;top:625.28px;line-height:9.16px;color:#f2eaea;font-size:8.2px;font-weight:normal;transform:scaleX(0.8700);transform-origin:0 0;">Sunny</div>
<svg class="a" style="left:913px;top:626px" width="8" height="5"><path d="M0.5 4.5L4 1L7.5 4.5" fill="none" stroke="#eee" stroke-width="1"/></svg>
<svg class="a" style="left:925px;top:625px" width="10" height="8"><path d="M1 7L4 2H9L9 7Z" fill="none" stroke="#ddd" stroke-width="1"/><path d="M0 0L10 8" stroke="#ddd" stroke-width="1"/></svg>
<svg class="a" style="left:939px;top:624px" width="8" height="10"><path d="M0.5 9.5Q1 3 7.5 1M2.5 9.5Q3 5 7.5 4M4.5 9.5Q5 7 7.5 6.5" fill="none" stroke="#ddd" stroke-width="0.9"/></svg>
<svg class="a" style="left:951px;top:624px" width="10" height="10"><path d="M0.5 3.5H2.5L5 1V9L2.5 6.5H0.5Z" fill="none" stroke="#ddd" stroke-width="0.9"/><path d="M6.5 3Q7.5 5 6.5 7M8 1.5Q10 5 8 8.5" fill="none" stroke="#ddd" stroke-width="0.8"/></svg>
<div class="a nw " style="left:966px;top:621.12px;line-height:8.49px;color:#f2eaea;font-size:7.6px;font-weight:normal;transform:scaleX(0.7790);transform-origin:0 0;">10:37 AM</div>
<div class="a nw " style="left:966.4px;top:630.12px;line-height:8.49px;color:#f2eaea;font-size:7.6px;font-weight:normal;transform:scaleX(0.8321);transform-origin:0 0;">8/6/2025</div>
<svg class="a" style="left:1001px;top:623px" width="14" height="15"><path d="M0.5 0.5H11.5V8.5H5L2.5 11V8.5H0.5Z" fill="#f2f2f2"/><path d="M2.5 3H9.5M2.5 5.5H8" stroke="#46161b" stroke-width="0.8"/><circle cx="9.5" cy="10.5" r="4" fill="#c21b1b" stroke="#fff" stroke-width="0.6"/><text x="9.5" y="13" font-size="6" fill="#fff" text-anchor="middle" font-family="Liberation Sans">4</text></svg>
</body></html>
